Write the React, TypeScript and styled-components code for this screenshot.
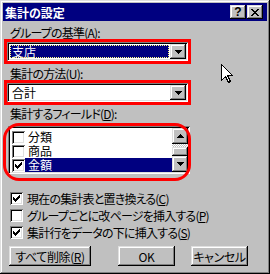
import React from "react";
import styled, { createGlobalStyle } from "styled-components";

const GlobalStyle = createGlobalStyle`
  html, body {
    margin: 0;
    padding: 0;
    background: #c0c0c0;
  }
  body {
    font-family: "Noto Sans CJK JP", "Noto Sans", sans-serif;
    font-size: 12px;
    font-feature-settings: "palt";
    color: #000;
  }
`;

const raised = `
  box-shadow: inset -1px -1px #000, inset 1px 1px #dfdfdf,
    inset -2px -2px #808080, inset 2px 2px #fff;
`;

const sunken = `
  box-shadow: inset 1px 1px #808080, inset -1px -1px #fff,
    inset 2px 2px #000, inset -2px -2px #dfdfdf;
`;

const Window = styled.div`
  position: relative;
  box-sizing: border-box;
  width: 270px;
  height: 274px;
  padding: 3px;
  background: #c0c0c0;
  ${raised}
  display: flex;
  flex-direction: column;
`;

const TitleBar = styled.div`
  height: 18px;
  background: #000080;
  color: #fff;
  display: flex;
  align-items: center;
  padding: 0 4px 0 2px;
`;

const Title = styled.div`
  flex: 1;
  font-weight: bold;
  line-height: 13px;
`;

const TitleButton = styled.div<{ $gap?: number }>`
  box-sizing: border-box;
  width: 16px;
  height: 14px;
  margin-left: ${(p) => p.$gap || 0}px;
  background: #c0c0c0;
  ${raised}
  color: #000;
  display: flex;
  align-items: center;
  justify-content: center;
  font-family: "Liberation Sans", sans-serif;
  font-weight: bold;
  font-size: 12px;
  line-height: 12px;
`;

const Body = styled.div`
  display: flex;
  flex-direction: column;
  align-items: flex-start;
  padding: 6px 0 0 1px;
`;

const Label = styled.div<{ $top?: number }>`
  height: 12px;
  line-height: 12px;
  margin: ${(p) => p.$top || 0}px 0 0 6px;
  letter-spacing: -0.8px;
  white-space: nowrap;
`;

const Key = styled.span`
  text-decoration: underline;
  text-underline-offset: 1px;
`;

const RedBox = styled.div`
  box-sizing: border-box;
  width: 187px;
  height: 25px;
  border: 3px solid #ff0000;
`;

const Combo = styled.div`
  box-sizing: border-box;
  height: 19px;
  padding: 2px;
  background: #fff;
  ${sunken}
  display: flex;
`;

const Field = styled.div<{ $selected?: boolean }>`
  flex: 1;
  margin: 1px;
  padding-left: 2px;
  line-height: 13px;
  background: ${(p) => (p.$selected ? "#000080" : "#fff")};
  color: ${(p) => (p.$selected ? "#fff" : "#000")};
  outline: ${(p) => (p.$selected ? "1px dotted #ffff7f" : "none")};
  outline-offset: -1px;
`;

const ArrowButton = styled.div<{ $h?: number }>`
  box-sizing: border-box;
  width: 16px;
  height: ${(p) => p.$h || 15}px;
  background: #c0c0c0;
  ${raised}
  display: flex;
  align-items: center;
  justify-content: center;
`;

const Ring = styled.div`
  position: relative;
  box-sizing: border-box;
  width: 188px;
  height: 58px;
  margin: 3px 0 0 -1px;
  padding: 3px 0 0 5px;

  &::after {
    content: "";
    position: absolute;
    inset: 0;
    border: 3px solid #ff0000;
    border-radius: 16px;
    pointer-events: none;
  }
`;

const ListBox = styled.div`
  box-sizing: border-box;
  width: 182px;
  height: 48px;
  padding: 2px;
  background: #fff;
  ${sunken}
  display: flex;
`;

const Items = styled.div`
  flex: 1;
  padding-top: 2px;
`;

const Item = styled.div`
  height: 14px;
  display: flex;
  align-items: center;
  padding-left: 2px;
`;

const ItemText = styled.div<{ $selected?: boolean }>`
  flex: 1;
  height: 14px;
  line-height: 14px;
  padding-left: 3px;
  background: ${(p) => (p.$selected ? "#000080" : "transparent")};
  color: ${(p) => (p.$selected ? "#fff" : "#000")};
`;

const ScrollBar = styled.div`
  width: 16px;
  display: flex;
  flex-direction: column;
`;

const Track = styled.div`
  flex: 1;
  padding-top: 3px;
  background: repeating-conic-gradient(#c0c0c0 0 25%, #fff 0 50%) 0 0 / 2px 2px;
`;

const Thumb = styled.div`
  height: 9px;
  background: #c0c0c0;
  ${raised}
`;

const Box = styled.div`
  box-sizing: border-box;
  flex: none;
  width: 13px;
  height: 13px;
  background: #fff;
  ${sunken}
  display: flex;
  align-items: center;
  justify-content: center;
`;

const Option = styled.div<{ $top: number }>`
  display: flex;
  align-items: center;
  gap: 4px;
  height: 13px;
  line-height: 13px;
  margin: ${(p) => p.$top}px 0 0 6px;
  letter-spacing: -0.8px;
  white-space: nowrap;
`;

const ButtonRow = styled.div`
  display: flex;
  margin-top: 7px;
`;

const Button = styled.div<{ $w: number; $left: number }>`
  box-sizing: border-box;
  width: ${(p) => p.$w}px;
  height: 20px;
  margin-left: ${(p) => p.$left}px;
  background: #c0c0c0;
  ${raised}
  display: flex;
  align-items: center;
  justify-content: center;
  line-height: 13px;
  letter-spacing: -0.4px;
  white-space: nowrap;
`;

const Cursor = styled.svg`
  position: absolute;
  left: 221px;
  top: 64px;
`;

const Down = () => (
  <svg width="7" height="4" viewBox="0 0 7 4" shapeRendering="crispEdges">
    <path d="M0 0h7v1H0zM1 1h5v1H1zM2 2h3v1H2zM3 3h1v1H3z" fill="#000" />
  </svg>
);

const Up = () => (
  <svg width="7" height="4" viewBox="0 0 7 4" shapeRendering="crispEdges">
    <path d="M3 0h1v1H3zM2 1h3v1H2zM1 2h5v1H1zM0 3h7v1H0z" fill="#000" />
  </svg>
);

const Check = () => (
  <svg width="7" height="7" viewBox="0 0 7 7" shapeRendering="crispEdges">
    <path
      d="M6 0h1v3H6zM5 1h1v3H5zM4 2h1v3H4zM0 2h1v3H0zM1 3h1v3H1zM2 4h1v3H2zM3 3h1v3H3z"
      fill="#000"
    />
  </svg>
);

const CheckBox: React.FC<{ checked?: boolean }> = ({ checked }) => (
  <Box>{checked && <Check />}</Box>
);

const fields = [
  { name: "分類", checked: false },
  { name: "商品", checked: false },
  { name: "金額", checked: true },
];

const options = [
  { text: "現在の集計表と置き換える", key: "C", checked: true, top: 11 },
  { text: "グループごとに改ページを挿入する", key: "P", checked: false, top: 4 },
  { text: "集計行をデータの下に挿入する", key: "S", checked: true, top: 4 },
];

export default function App() {
  return (
    <>
      <GlobalStyle />
      <Window>
        <TitleBar>
          <Title>集計の設定</Title>
          <TitleButton>?</TitleButton>
          <TitleButton $gap={1}>
            <svg width="8" height="7" viewBox="0 0 8 7" shapeRendering="crispEdges">
              <path
                d="M0 0h2v1H0zM6 0h2v1H6zM1 1h2v1H1zM5 1h2v1H5zM2 2h4v1H2zM3 3h2v1H3zM2 4h4v1H2zM1 5h2v1H1zM5 5h2v1H5zM0 6h2v1H0zM6 6h2v1H6z"
                fill="#000"
              />
            </svg>
          </TitleButton>
        </TitleBar>
        <Body>
          <Label>
            グループの基準(<Key>A</Key>):
          </Label>
          <RedBox>
            <Combo>
              <Field $selected>支店</Field>
              <ArrowButton>
                <Down />
              </ArrowButton>
            </Combo>
          </RedBox>
          <Label $top={4}>
            集計の方法(<Key>U</Key>):
          </Label>
          <RedBox>
            <Combo>
              <Field>合計</Field>
              <ArrowButton>
                <Down />
              </ArrowButton>
            </Combo>
          </RedBox>
          <Label $top={3}>
            集計するフィールド(<Key>D</Key>):
          </Label>
          <Ring>
            <ListBox>
              <Items>
                {fields.map((f) => (
                  <Item key={f.name}>
                    <CheckBox checked={f.checked} />
                    <ItemText $selected={f.checked}>{f.name}</ItemText>
                  </Item>
                ))}
              </Items>
              <ScrollBar>
                <ArrowButton $h={16}>
                  <Up />
                </ArrowButton>
                <Track>
                  <Thumb />
                </Track>
                <ArrowButton $h={16}>
                  <Down />
                </ArrowButton>
              </ScrollBar>
            </ListBox>
          </Ring>
          {options.map((o) => (
            <Option key={o.key} $top={o.top}>
              <CheckBox checked={o.checked} />
              <span>
                {o.text}(<Key>{o.key}</Key>)
              </span>
            </Option>
          ))}
          <ButtonRow>
            <Button $w={82} $left={5}>
              すべて削除(<Key>R</Key>)
            </Button>
            <Button $w={57} $left={27}>
              OK
            </Button>
            <Button $w={57} $left={16}>
              キャンセル
            </Button>
          </ButtonRow>
        </Body>
        <Cursor width="12" height="19" viewBox="0 0 12 19" shapeRendering="crispEdges">
          <path
            d="M0.5 0.5V16.5L4.5 12.5L7.5 18.5L9.5 17.5L6.5 11.5H11.5Z"
            fill="#fff"
            stroke="#000"
            strokeWidth="1"
          />
        </Cursor>
      </Window>
    </>
  );
}
